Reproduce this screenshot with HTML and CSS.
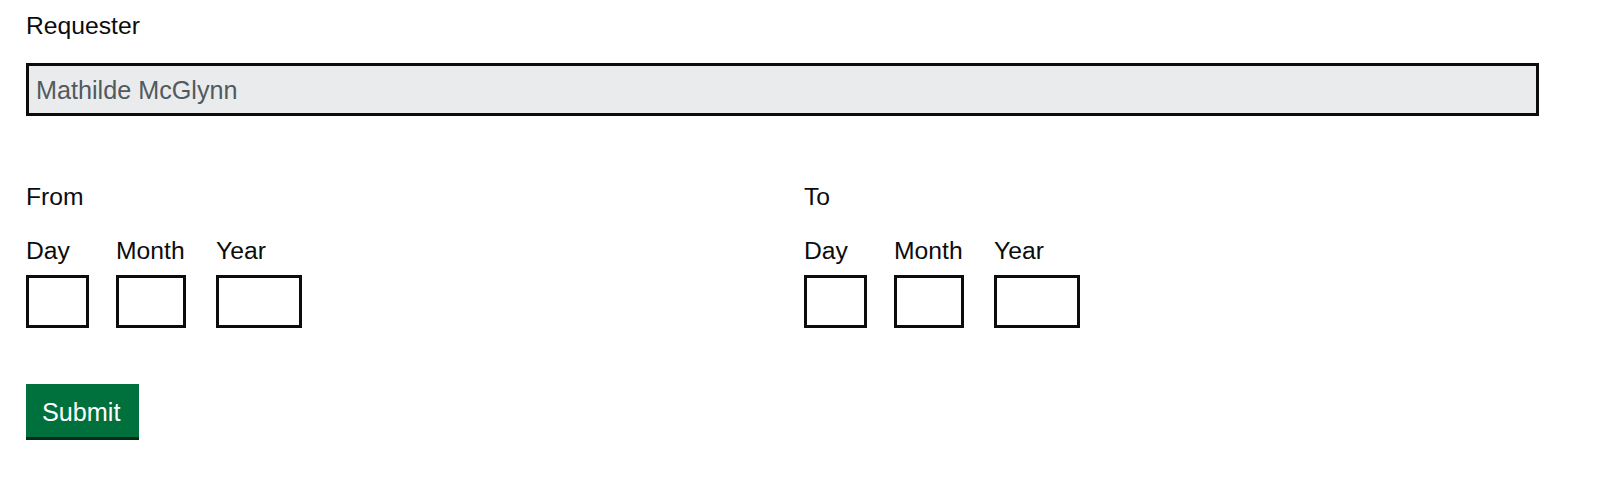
FILE: index.html
```html
<!DOCTYPE html>
<html lang="en">
<head>
<meta charset="utf-8">
<title>Request form</title>
<link rel="stylesheet" href="styles.css">
</head>
<body>
<main class="page">
  <div class="form-group form-group--requester">
    <label class="label label--requester" for="requester">Requester</label>
    <input class="input input--full" id="requester" type="text" value="Mathilde McGlynn" disabled>
  </div>

  <div class="dates">
    <div class="date-group" role="group" aria-labelledby="from-legend">
      <div class="legend" id="from-legend">From</div>
      <div class="date-input">
        <div class="date-item date-item--day">
          <label class="label label--date" for="from-day">Day</label>
          <input class="input input--day" id="from-day" type="text" inputmode="numeric">
        </div>
        <div class="date-item date-item--month">
          <label class="label label--date" for="from-month">Month</label>
          <input class="input input--month" id="from-month" type="text" inputmode="numeric">
        </div>
        <div class="date-item date-item--year">
          <label class="label label--date" for="from-year">Year</label>
          <input class="input input--year" id="from-year" type="text" inputmode="numeric">
        </div>
      </div>
    </div>

    <div class="date-group" role="group" aria-labelledby="to-legend">
      <div class="legend" id="to-legend">To</div>
      <div class="date-input">
        <div class="date-item date-item--day">
          <label class="label label--date" for="to-day">Day</label>
          <input class="input input--day" id="to-day" type="text" inputmode="numeric">
        </div>
        <div class="date-item date-item--month">
          <label class="label label--date" for="to-month">Month</label>
          <input class="input input--month" id="to-month" type="text" inputmode="numeric">
        </div>
        <div class="date-item date-item--year">
          <label class="label label--date" for="to-year">Year</label>
          <input class="input input--year" id="to-year" type="text" inputmode="numeric">
        </div>
      </div>
    </div>
  </div>

  <button class="button" type="submit">Submit</button>
</main>
</body>
</html>
```

FILE: styles.css
```css
html, body {
  margin: 0;
  padding: 0;
  background: #ffffff;
}

body {
  font-family: "Liberation Sans", Arial, sans-serif;
  color: #0b0c0c;
  font-size: 24.7px;
}

.page {
  width: 1513px;
  padding: 10px 0 0 26px;
}

.label,
.legend {
  display: block;
  font-size: 24.7px;
  line-height: 32.5px;
  color: #0b0c0c;
}

.label--requester {
  margin-bottom: 20.5px;
}

.form-group--requester {
  margin-bottom: 65px;
}

.input {
  display: block;
  box-sizing: border-box;
  height: 53px;
  margin: 0;
  padding: 7px 7px 5px;
  border: 3px solid #0b0c0c;
  border-radius: 0;
  background: #ffffff;
  font-family: "Liberation Sans", Arial, sans-serif;
  font-size: 24.7px;
  line-height: 32.5px;
  color: #0b0c0c;
  -webkit-appearance: none;
  appearance: none;
}

.input--full {
  width: 100%;
  font-size: 25.2px;
}

.input--full:disabled {
  background: #eaebed;
  color: #505a5f;
  -webkit-text-fill-color: #505a5f;
  opacity: 1;
}

.dates {
  display: grid;
  grid-template-columns: 735px 735px;
  column-gap: 43px;
  margin-bottom: 56px;
}

.legend {
  margin-bottom: 21.5px;
}

.date-input {
  display: flex;
  gap: 27px;
}

.date-item {
  display: flex;
  flex-direction: column;
}

.date-item--day { min-width: 63px; }
.date-item--month { min-width: 73px; }
.date-item--year { min-width: 86px; }

.label--date {
  margin-bottom: 7.8px;
  white-space: nowrap;
}

.input--day { width: 63px; }
.input--month { width: 70px; }
.input--year { width: 86px; }

.button {
  display: inline-block;
  box-sizing: border-box;
  height: 56px;
  margin: 0;
  padding: 10px 19px 8px 16px;
  border: 0;
  border-bottom: 3px solid #002d18;
  border-radius: 0;
  background: #00703c;
  color: #ffffff;
  font-family: "Liberation Sans", Arial, sans-serif;
  font-size: 25.2px;
  line-height: 30px;
  cursor: pointer;
  -webkit-appearance: none;
  appearance: none;
}
```
